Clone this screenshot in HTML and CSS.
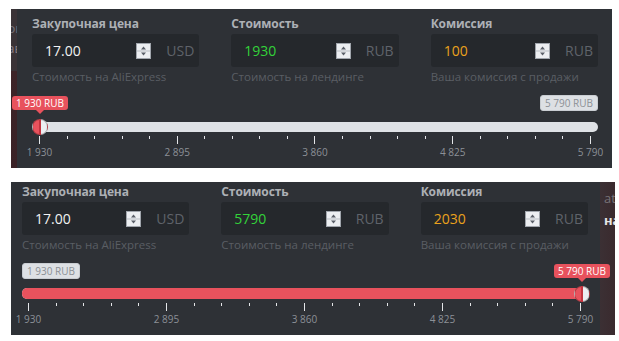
FILE: index.html
```html
<!DOCTYPE html>
<html>
	<head>
		<meta charset="utf-8">
		<title>Калькулятор</title>
		<link rel="stylesheet" href="styles.css">
	</head>
	<body>
		<div class="shot shot-top">
			<div class="edge edge-left">
				<span class="edge-dim">ок</span>
				<span>ав</span>
			</div>
			<div class="calc calc-a">
				<div class="fields">
					<div class="field">
						<div class="field-label">Закупочная цена</div>
						<div class="input-group">
							<div class="input-value">17.00
								<svg class="spin" width="15" height="16" viewBox="0 0 15 16"><rect x=".5" y=".5" width="14" height="15" fill="#eceef1" stroke="#a1a6ad"/><line x1="1" y1="8" x2="14" y2="8" stroke="#b9bdc3"/><path d="M5 6.5h5l-2.5-3z" fill="#5a5f68"/><path d="M5 9.5h5l-2.5 3z" fill="#5a5f68"/></svg>
							</div>
							<div class="addon">USD</div>
						</div>
						<div class="field-help">Стоимость на AliExpress</div>
					</div>
					<div class="field">
						<div class="field-label">Стоимость</div>
						<div class="input-group">
							<div class="input-value green">1930
								<svg class="spin" width="15" height="16" viewBox="0 0 15 16"><rect x=".5" y=".5" width="14" height="15" fill="#eceef1" stroke="#a1a6ad"/><line x1="1" y1="8" x2="14" y2="8" stroke="#b9bdc3"/><path d="M5 6.5h5l-2.5-3z" fill="#5a5f68"/><path d="M5 9.5h5l-2.5 3z" fill="#5a5f68"/></svg>
							</div>
							<div class="addon">RUB</div>
						</div>
						<div class="field-help">Стоимость на лендинге</div>
					</div>
					<div class="field">
						<div class="field-label">Комиссия</div>
						<div class="input-group">
							<div class="input-value orange">100
								<svg class="spin" width="15" height="16" viewBox="0 0 15 16"><rect x=".5" y=".5" width="14" height="15" fill="#eceef1" stroke="#a1a6ad"/><line x1="1" y1="8" x2="14" y2="8" stroke="#b9bdc3"/><path d="M5 6.5h5l-2.5-3z" fill="#5a5f68"/><path d="M5 9.5h5l-2.5 3z" fill="#5a5f68"/></svg>
							</div>
							<div class="addon">RUB</div>
						</div>
						<div class="field-help">Ваша комиссия с продажи</div>
					</div>
				</div>
				<div class="slider">
					<div class="slider-tips">
						<span class="tip tip-red at-min">1 930 RUB</span>
						<span class="tip tip-gray tip-right">5 790 RUB</span>
					</div>
					<div class="track">
						<span class="handle at-min"></span>
					</div>
					<div class="scale">
						<div class="tick major"><i></i><span>1 930</span></div>
						<div class="tick"><i></i></div><div class="tick"><i></i></div><div class="tick"><i></i></div><div class="tick"><i></i></div>
						<div class="tick major"><i></i><span>2 895</span></div>
						<div class="tick"><i></i></div><div class="tick"><i></i></div><div class="tick"><i></i></div><div class="tick"><i></i></div>
						<div class="tick major"><i></i><span>3 860</span></div>
						<div class="tick"><i></i></div><div class="tick"><i></i></div><div class="tick"><i></i></div><div class="tick"><i></i></div>
						<div class="tick major"><i></i><span>4 825</span></div>
						<div class="tick"><i></i></div><div class="tick"><i></i></div><div class="tick"><i></i></div><div class="tick"><i></i></div>
						<div class="tick major"><i></i><span>5 790</span></div>
					</div>
				</div>
			</div>
		</div>

		<div class="shot shot-bottom">
			<div class="calc calc-b">
				<div class="fields">
					<div class="field">
						<div class="field-label">Закупочная цена</div>
						<div class="input-group">
							<div class="input-value">17.00
								<svg class="spin" width="15" height="16" viewBox="0 0 15 16"><rect x=".5" y=".5" width="14" height="15" fill="#eceef1" stroke="#a1a6ad"/><line x1="1" y1="8" x2="14" y2="8" stroke="#b9bdc3"/><path d="M5 6.5h5l-2.5-3z" fill="#5a5f68"/><path d="M5 9.5h5l-2.5 3z" fill="#5a5f68"/></svg>
							</div>
							<div class="addon">USD</div>
						</div>
						<div class="field-help">Стоимость на AliExpress</div>
					</div>
					<div class="field">
						<div class="field-label">Стоимость</div>
						<div class="input-group">
							<div class="input-value green">5790
								<svg class="spin" width="15" height="16" viewBox="0 0 15 16"><rect x=".5" y=".5" width="14" height="15" fill="#eceef1" stroke="#a1a6ad"/><line x1="1" y1="8" x2="14" y2="8" stroke="#b9bdc3"/><path d="M5 6.5h5l-2.5-3z" fill="#5a5f68"/><path d="M5 9.5h5l-2.5 3z" fill="#5a5f68"/></svg>
							</div>
							<div class="addon">RUB</div>
						</div>
						<div class="field-help">Стоимость на лендинге</div>
					</div>
					<div class="field">
						<div class="field-label">Комиссия</div>
						<div class="input-group">
							<div class="input-value orange">2030
								<svg class="spin" width="15" height="16" viewBox="0 0 15 16"><rect x=".5" y=".5" width="14" height="15" fill="#eceef1" stroke="#a1a6ad"/><line x1="1" y1="8" x2="14" y2="8" stroke="#b9bdc3"/><path d="M5 6.5h5l-2.5-3z" fill="#5a5f68"/><path d="M5 9.5h5l-2.5 3z" fill="#5a5f68"/></svg>
							</div>
							<div class="addon">RUB</div>
						</div>
						<div class="field-help">Ваша комиссия с продажи</div>
					</div>
				</div>
				<div class="slider">
					<div class="slider-tips">
						<span class="tip tip-gray">1 930 RUB</span>
						<span class="tip tip-red at-max">5 790 RUB</span>
					</div>
					<div class="track">
						<div class="track-fill"></div>
						<span class="handle at-max"></span>
					</div>
					<div class="scale">
						<div class="tick major"><i></i><span>1 930</span></div>
						<div class="tick"><i></i></div><div class="tick"><i></i></div><div class="tick"><i></i></div><div class="tick"><i></i></div>
						<div class="tick major"><i></i><span>2 895</span></div>
						<div class="tick"><i></i></div><div class="tick"><i></i></div><div class="tick"><i></i></div><div class="tick"><i></i></div>
						<div class="tick major"><i></i><span>3 860</span></div>
						<div class="tick"><i></i></div><div class="tick"><i></i></div><div class="tick"><i></i></div><div class="tick"><i></i></div>
						<div class="tick major"><i></i><span>4 825</span></div>
						<div class="tick"><i></i></div><div class="tick"><i></i></div><div class="tick"><i></i></div><div class="tick"><i></i></div>
						<div class="tick major"><i></i><span>5 790</span></div>
					</div>
				</div>
			</div>
			<div class="edge edge-right">
				<span class="edge-dim">at</span>
				<span class="edge-bold">на</span>
			</div>
		</div>
	</body>
</html>
```

FILE: styles.css
```css
body{
	margin: 0;
	background-color: #fff;
	font-family: "Open Sans", "Noto Sans", sans-serif;
}
.shot{
	display: flex;
	margin-left: 11px;
}
.shot-top{
	margin-top: 9px;
	width: 601px;
	height: 159px;
}
.shot-bottom{
	margin-top: 14px;
	width: 604px;
	height: 153px;
}

/* кусочки соседних блоков по краям скриншота */
.edge{
	display: flex;
	flex-direction: column;
	overflow: hidden;
	font-size: 13px;
	line-height: 20px;
	color: #8a7e83;
}
.edge-left{
	width: 6px;
	padding-top: 9px;
	align-items: flex-end;
	background: linear-gradient(#3a3337 0, #3a3337 62px, #3d2428 62px, #3a2226 100%);
}
.edge-left span{
	margin-right: -5px;
}
.edge-right{
	width: 11px;
	padding: 6px 0 0 4px;
	background: linear-gradient(90deg, #3b3034, #3a2a2e);
}
.edge-dim{
	color: #777277;
}
.edge-bold{
	margin-top: 2px;
	font-weight: bold;
	color: #e6e6e6;
}

.calc{
	background-color: #2e3136;
	box-sizing: border-box;
}
.calc-a{
	width: 595px;
	padding: 7px 14px 0 15px;
}
.calc-b{
	width: 589px;
	padding: 2px 12px 0 11px;
}

.fields{
	display: flex;
	gap: 32px;
}
.field{
	width: 168px;
}
.field-label{
	font-size: 12px;
	line-height: 16px;
	font-weight: bold;
	letter-spacing: -0.1px;
	color: #adb0b5;
}
.input-group{
	display: flex;
	height: 33px;
	margin-top: 2px;
	background-color: #25282c;
	border-radius: 3px;
}
.input-value{
	flex: 1;
	display: flex;
	align-items: center;
	justify-content: space-between;
	padding: 0 8px 0 13px;
	font-size: 14px;
	color: #f2f2f2;
}
.input-value.green{
	color: #33d23a;
}
.input-value.orange{
	color: #eba21c;
}
.spin{
	display: block;
}
.addon{
	width: 40px;
	padding-right: 5px;
	box-sizing: border-box;
	text-align: right;
	line-height: 33px;
	font-size: 14px;
	color: #5f636a;
}
.field-help{
	margin-top: 2px;
	font-size: 11.5px;
	line-height: 16px;
	color: #5a5e64;
}

/* слайдер */
.slider{
	margin-top: 11px;
	position: relative;
}
.calc-a .slider{
	margin-left: 1px;
}
.slider-tips{
	position: relative;
	height: 26px;
}
.calc-b .slider-tips{
	height: 24px;
}
.tip{
	position: absolute;
	top: 0;
	height: 14px;
	padding: 0 4px;
	border-radius: 3px;
	font-size: 10px;
	line-height: 14px;
	white-space: nowrap;
}
.tip-red{
	background-color: #e8525d;
	color: #fff;
	transform: translateX(-50%);
}
.tip-red:after{
	content: '';
	position: absolute;
	left: 50%;
	bottom: -4px;
	margin-left: -4px;
	border: 4px solid transparent;
	border-bottom: 0;
	border-top-color: #e8525d;
}
.tip-gray{
	left: 0;
	background-color: #dde0e4;
	border: 1px solid #c9cdd2;
	top: -1px;
	color: #8c9096;
}
.tip-right{
	left: auto;
	right: 0;
}
.tip.at-min{
	left: 7px;
}
.tip.at-max{
	left: calc(100% - 6px);
}

.track{
	position: relative;
	height: 10px;
	border-radius: 5px;
	background-color: #dfe2e6;
}
.calc-b .track{
	height: 11px;
}
.track-fill{
	height: 100%;
	width: calc(100% - 6px);
	border-radius: 5px 0 0 5px;
	background-color: #e8525d;
}
.handle{
	position: absolute;
	top: 50%;
	width: 14px;
	height: 14px;
	margin: -8px 0 0 -8px;
	border: 1px solid rgba(0, 0, 0, 0.25);
	border-radius: 50%;
	background: linear-gradient(90deg, #e8525d 50%, #eceef1 50%);
}
.handle:after{
	content: '';
	position: absolute;
	left: 6px;
	top: -1px;
	bottom: -1px;
	width: 2px;
	background-color: #c4343f;
}
.handle.at-min{
	left: 7px;
}
.handle.at-max{
	left: calc(100% - 6px);
}

.scale{
	display: flex;
	justify-content: space-between;
	margin: 4px 7px 0 6px;
}
.tick{
	width: 1px;
	display: flex;
	flex-direction: column;
	align-items: center;
}
.tick i{
	display: block;
	width: 1px;
	height: 3px;
	background-color: #e4e6e9;
}
.tick.major i{
	height: 8px;
}
.tick span{
	margin-top: 2px;
	font-size: 10px;
	line-height: 12px;
	color: #8c9096;
	white-space: nowrap;
}
```
